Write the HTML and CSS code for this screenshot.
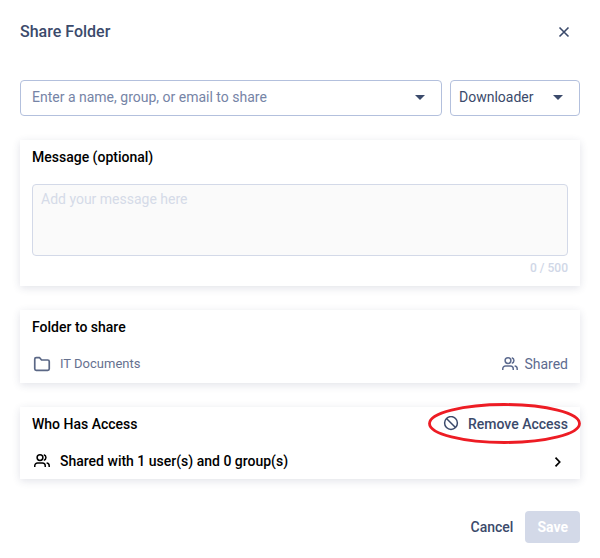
FILE: index.html
```html
<!DOCTYPE html>
<html lang="en">
<head>
<meta charset="utf-8">
<meta name="viewport" content="width=device-width, initial-scale=1">
<title>Share Folder</title>
<link rel="stylesheet" href="styles.css">
</head>
<body>
<form class="dialog">
  <header class="dialog-header">
    <h1>Share Folder</h1>
    <button type="button" class="close" aria-label="Close">
      <svg width="16" height="16" viewBox="0 0 16 16" fill="none" stroke="currentColor" stroke-width="1.6"><path d="M3.5 3.5l9 9M12.5 3.5l-9 9"/></svg>
    </button>
  </header>

  <div class="pickers">
    <div class="field recipient">
      <input type="text" aria-label="Share with" placeholder="Enter a name, group, or email to share">
      <svg class="caret" width="10" height="5" viewBox="0 0 10 5" fill="currentColor"><path d="M0 0h10L5 5z"/></svg>
    </div>
    <div class="field role">
      <select aria-label="Role"><option>Downloader</option></select>
      <svg class="caret" width="10" height="5" viewBox="0 0 10 5" fill="currentColor"><path d="M0 0h10L5 5z"/></svg>
    </div>
  </div>

  <section class="card">
    <label class="card-title" for="message">Message (optional)</label>
    <textarea id="message" class="message" placeholder="Add your message here"></textarea>
    <div class="counter">0 / 500</div>
  </section>

  <section class="card">
    <h2 class="card-title">Folder to share</h2>
    <div class="row">
      <svg class="icon muted" width="20" height="20" viewBox="0 0 20 20" fill="none" stroke="currentColor" stroke-width="1.7" stroke-linejoin="round"><path d="M2.75 5.2a1.5 1.5 0 0 1 1.5-1.5h3.4l1.9 2.3h6.2a1.5 1.5 0 0 1 1.5 1.5v7.3a1.5 1.5 0 0 1-1.5 1.5H4.25a1.5 1.5 0 0 1-1.5-1.5z"/></svg>
      <span class="folder-name">IT Documents</span>
      <span class="status">
        <svg width="16" height="16" viewBox="0 0 16 16" fill="none" stroke="currentColor" stroke-width="1.5"><circle cx="6" cy="4.6" r="2.9"/><path d="M.75 14v-1.3a2.8 2.8 0 0 1 2.8-2.8h4.9a2.8 2.8 0 0 1 2.8 2.8V14M9.8 1.8a2.9 2.9 0 0 1 0 5.6M12.6 10a2.8 2.8 0 0 1 2.6 2.7V14"/></svg>
        Shared
      </span>
    </div>
  </section>

  <section class="card card-access">
    <div class="card-head">
      <h2 class="card-title">Who Has Access</h2>
      <button type="button" class="remove">
        <svg width="16" height="16" viewBox="0 0 16 16" fill="none" stroke="currentColor" stroke-width="1.5"><circle cx="8" cy="7" r="6.4"/><path d="M3.5 2.5l9 9"/></svg>
        Remove Access
        <svg class="highlight" viewBox="0 0 153 41" preserveAspectRatio="none" fill="none" stroke="#ed1c24" stroke-width="2.8" aria-hidden="true"><ellipse cx="76.5" cy="20.5" rx="75" ry="19"/></svg>
      </button>
    </div>
    <button type="button" class="row access">
      <svg class="icon" width="20" height="20" viewBox="-2 -2 20 20" fill="none" stroke="currentColor" stroke-width="1.5"><circle cx="6" cy="4.6" r="2.9"/><path d="M.75 14v-1.3a2.8 2.8 0 0 1 2.8-2.8h4.9a2.8 2.8 0 0 1 2.8 2.8V14M9.8 1.8a2.9 2.9 0 0 1 0 5.6M12.6 10a2.8 2.8 0 0 1 2.6 2.7V14"/></svg>
      <span>Shared with 1 user(s) and 0 group(s)</span>
      <svg class="chevron" width="20" height="20" viewBox="0 0 20 20" fill="none" stroke="currentColor" stroke-width="1.7"><path d="M7.5 6.7l4.2 4.3-4.2 4.3"/></svg>
    </button>
  </section>

  <footer class="actions">
    <button type="button" class="cancel">Cancel</button>
    <button type="submit" class="save" disabled>Save</button>
  </footer>
</form>
</body>
</html>
```
FILE: styles.css
```css
* {
  box-sizing: border-box;
}

body {
  margin: 0;
  background: #fff;
  color: #3b4a6b;
  font: 14px/20px Roboto, "Liberation Sans", sans-serif;
}

h1,
h2 {
  margin: 0;
}

button,
input,
select,
textarea {
  font: inherit;
  color: inherit;
}

button {
  padding: 0;
  border: 0;
  background: none;
}

svg {
  display: block;
  flex: none;
}

.dialog {
  display: flex;
  flex-direction: column;
  gap: 24px;
  padding: 16px 20px;
}

.dialog-header {
  display: flex;
  align-items: center;
  justify-content: space-between;
  height: 32px;
  margin-bottom: 8px;
}

h1 {
  font-size: 16px;
  font-weight: 500;
}

.close {
  padding: 8px;
}

.pickers {
  display: flex;
  gap: 8px;
}

.field {
  position: relative;
}

.recipient {
  flex: 1;
}

.role {
  width: 130px;
}

.field input,
.field select {
  display: block;
  width: 100%;
  height: 36px;
  border: 1px solid #b3c0dd;
  border-radius: 4px;
  background: #fff;
  appearance: none;
}

.field input {
  padding: 0 32px 3px 11px;
}

.field select {
  padding: 0 32px 2px 8px;
}

.field input::placeholder {
  color: #7684a6;
  opacity: 1;
}

.caret {
  position: absolute;
  top: 15px;
  right: 17px;
  pointer-events: none;
}

.card {
  display: flex;
  flex-direction: column;
  padding: 8px 12px 9px;
  background: #fff;
  box-shadow: 0 2px 8px rgba(50, 60, 100, 0.14);
}

.card-access {
  padding-bottom: 8px;
}

.card-title {
  color: #000;
  font-size: 14px;
  font-weight: 500;
  line-height: 18px;
}

.message {
  height: 72px;
  margin-top: 18px;
  padding: 4px 8px;
  border: 1px solid #d3d9e8;
  border-radius: 4px;
  background: #fafafa;
  resize: none;
}

.message::placeholder {
  color: #d5dbe8;
  opacity: 1;
}

.counter {
  margin-top: 4px;
  color: #d0d7e7;
  font-size: 12px;
  font-weight: 500;
  line-height: 17px;
  text-align: right;
}

.row {
  display: flex;
  align-items: center;
  gap: 8px;
  height: 20px;
  margin-top: 18px;
}

.muted {
  color: #5a6785;
}

.folder-name {
  color: #66718f;
  font-size: 13px;
}

.status {
  display: flex;
  align-items: center;
  gap: 6px;
  margin-left: auto;
  color: #5d6b8f;
}

.card-head {
  display: flex;
  justify-content: space-between;
}

.remove {
  position: relative;
  display: flex;
  align-items: center;
  gap: 9px;
  font-weight: 500;
  line-height: 18px;
}

.highlight {
  position: absolute;
  top: -12px;
  left: -15px;
  width: calc(100% + 28px);
  height: 41px;
  pointer-events: none;
}

.access {
  margin-top: 17px;
  height: 21px;
  color: #000;
  font-weight: 500;
}

.chevron {
  margin-left: auto;
}

.actions {
  display: flex;
  justify-content: flex-end;
  gap: 12px;
  margin-top: 8px;
}

.cancel,
.save {
  height: 32px;
  font-weight: 500;
}

.save {
  padding: 0 12px;
  border-radius: 4px;
  background: #d3d9e8;
  color: #fff;
  font-weight: 700;
}
```
